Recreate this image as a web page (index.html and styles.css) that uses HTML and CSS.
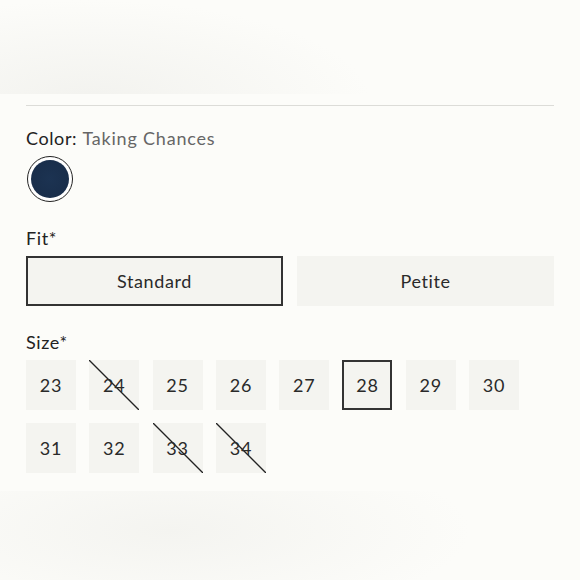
FILE: index.html
```html
<!DOCTYPE html>
<html>
<head>
<meta charset="utf-8">
<link rel="stylesheet" href="styles.css">
</head>
<body>
<div class="hero"></div>
<div class="content">
  <div class="rule"></div>
  <div class="label color-label"><span class="key">Color:</span> <span class="val">Taking Chances</span></div>
  <div class="swatch"><span class="dot"></span></div>
  <div class="label fit-label">Fit*</div>
  <div class="fits">
    <div class="fit selected">Standard</div>
    <div class="fit">Petite</div>
  </div>
  <div class="label size-label">Size*</div>
  <div class="sizes">
    <div class="size">23</div>
    <div class="size out">24</div>
    <div class="size">25</div>
    <div class="size">26</div>
    <div class="size">27</div>
    <div class="size selected">28</div>
    <div class="size">29</div>
    <div class="size">30</div>
    <div class="size">31</div>
    <div class="size">32</div>
    <div class="size out">33</div>
    <div class="size out">34</div>
  </div>
</div>
<div class="footer"></div>
</body>
</html>
```
FILE: styles.css
```css
html, body {
  margin: 0;
  padding: 0;
  background: #fcfcf9;
  font-family: Lato, "Open Sans", sans-serif;
  color: #222;
}
.hero {
  height: 94px;
  background:
    radial-gradient(ellipse 280px 100px at 90px 100px, rgba(240,240,236,0.8), rgba(252,252,249,0) 100%);
}
.content {
  padding: 0 26px;
  height: 386px;
}
.rule {
  margin-top: 11px;
  height: 1px;
  background: #dcdcd8;
}
.label {
  font-size: 18px;
  line-height: 22px;
  letter-spacing: 0.6px;
  color: #222;
}
.color-label {
  margin-top: 21px;
}
.val {
  color: #666;
  font-weight: 400;
  letter-spacing: 0.8px;
}
.swatch {
  margin-top: 7px;
  margin-left: 1px;
  width: 44px;
  height: 44px;
  border: 1.5px solid #222;
  border-radius: 50%;
  display: flex;
  align-items: center;
  justify-content: center;
  background: #fff;
}
.dot {
  width: 38px;
  height: 38px;
  border-radius: 50%;
  background: radial-gradient(circle, #1c3352 0%, #192e4b 70%, #253d5e 100%);
}
.fit-label {
  margin-top: 25px;
}
.fits {
  margin-top: 7px;
  display: grid;
  grid-template-columns: 1fr 1fr;
  gap: 14px;
}
.fit {
  height: 50px;
  box-sizing: border-box;
  background: #f4f4f0;
  display: flex;
  align-items: center;
  justify-content: center;
  font-size: 18px;
  letter-spacing: 0.6px;
  color: #2a2a2a;
}
.fit.selected {
  border: 2px solid #333;
}
.size-label {
  margin-top: 25px;
}
.sizes {
  margin-top: 7px;
  display: grid;
  grid-template-columns: repeat(8, 50px);
  column-gap: 13.3px;
  row-gap: 13px;
}
.size {
  height: 50px;
  box-sizing: border-box;
  background: #f4f4f0;
  display: flex;
  align-items: center;
  justify-content: center;
  font-size: 18px;
  letter-spacing: 0.8px;
  color: #2a2a2a;
}
.size.selected {
  border: 2px solid #333;
}
.size.out {
  background:
    linear-gradient(to top right, transparent calc(50% - 0.8px), #222 calc(50% - 0.6px), #222 calc(50% + 0.6px), transparent calc(50% + 0.8px)),
    #f4f4f0;
}
.footer {
  height: 100px;
  background:
    radial-gradient(ellipse 300px 90px at 170px 40px, rgba(242,242,238,0.8), rgba(252,252,249,0) 100%);
}
```
